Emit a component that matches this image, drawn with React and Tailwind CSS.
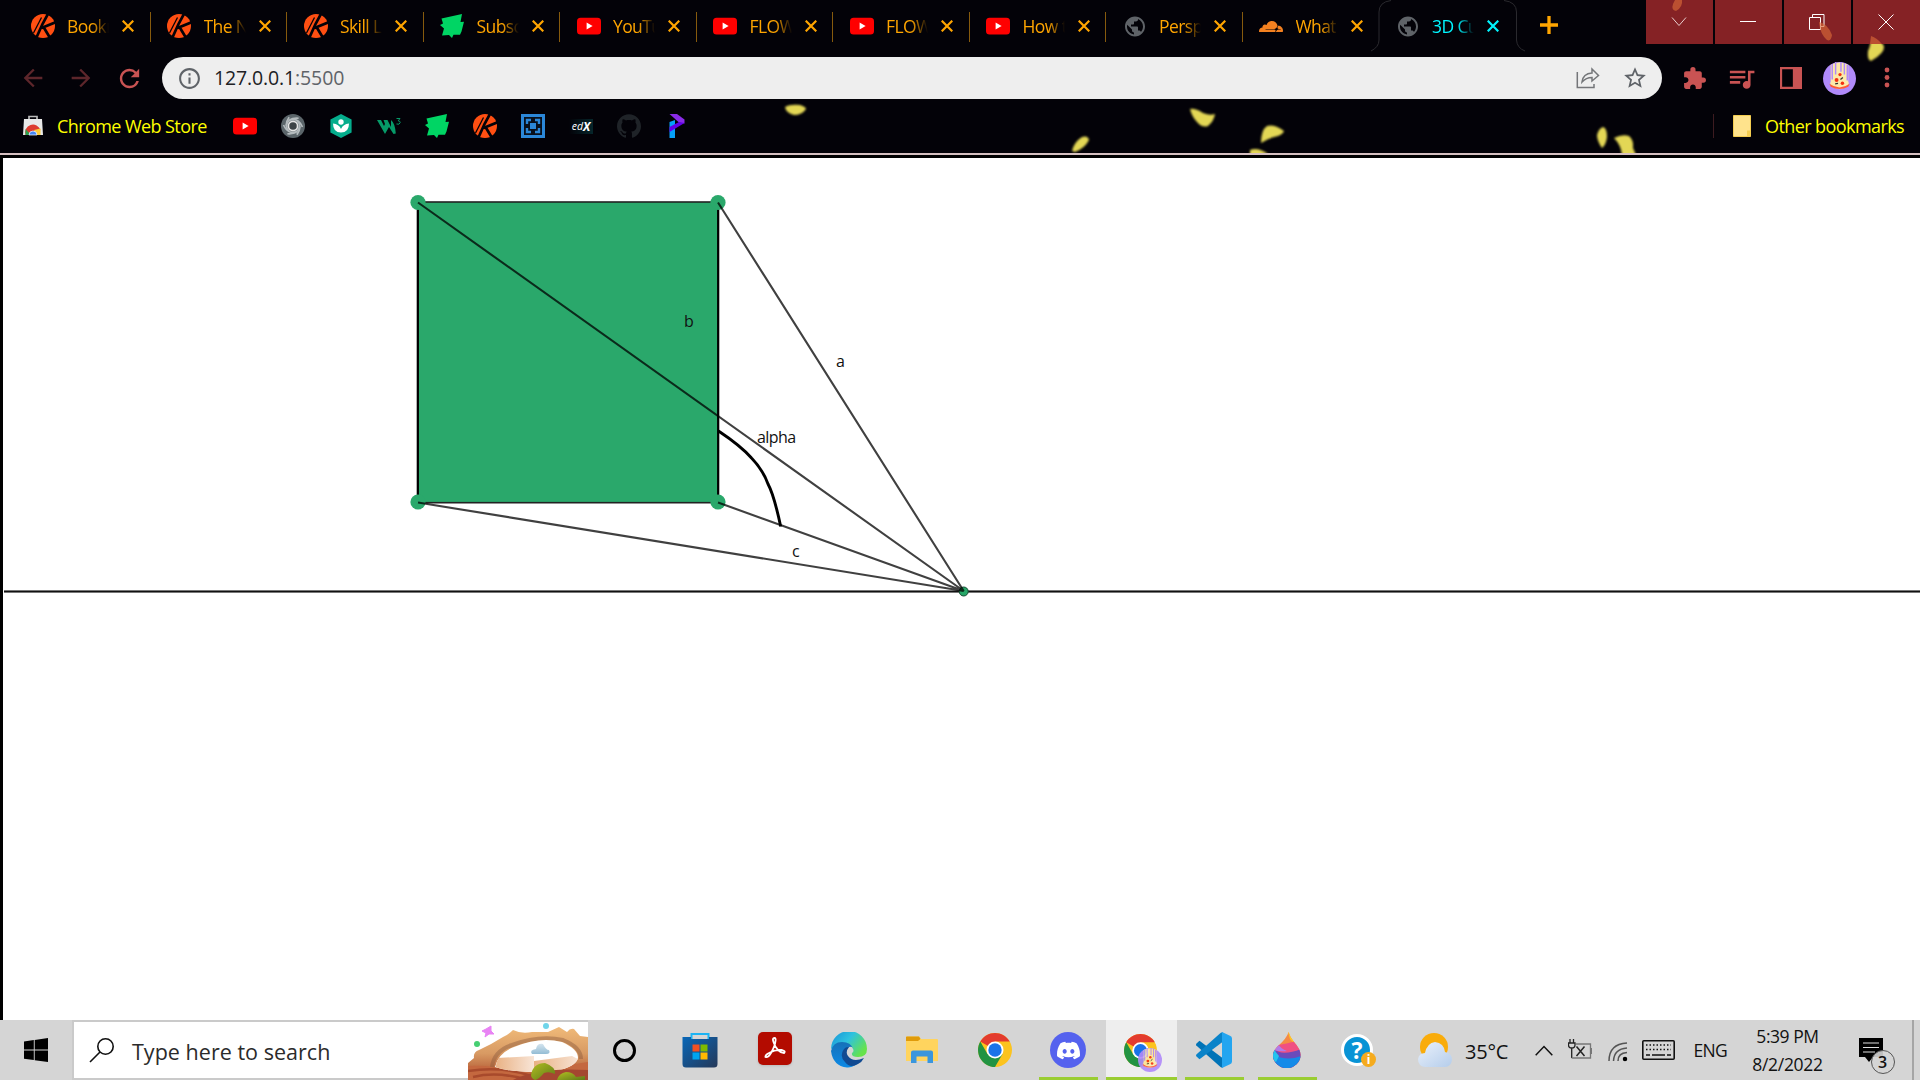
import React from "react";
import { MdExtension, MdQueueMusic, MdStarBorder, MdPublic, MdRefresh, MdArrowBack, MdArrowForward, MdInfoOutline } from "react-icons/md";
import { SiCloudflare, SiGithub, SiDiscord } from "react-icons/si";

const YouTube = () => (
  <svg width="24" height="24" viewBox="0 0 24 24">
    <rect x="0" y="3.8" width="24" height="16.6" rx="3.5" fill="#ff0000" />
    <path d="M9.6 8.5 15.6 12 9.6 15.4z" fill="#fff" />
  </svg>
);
const Kay = () => (
  <svg width="24" height="24" viewBox="0 0 24 24">
    <circle cx="12" cy="12" r="12" fill="#ff4f12" />
    <path d="M17.500-1 11.500 10 5 24.500M10.500 14 24.500 8.300M12.500 13 18.500 23" stroke="#030208" strokeWidth="2.700" fill="none" />
    <path d="M10.500 3.500 2.500 19" stroke="#030208" strokeWidth="1.300" fill="none" />
  </svg>
);
const Green = () => (
  <svg width="24" height="24" viewBox="0 0 24 24">
    <path d="M1.500 4.500 22 0 20.500 8 24 7.700 21.500 17.500 20 20.800 13.500 20.800 12 24 9 21 2 21.500 4 14.500 0 11 3 9.500z" fill="#00d564" />
  </svg>
);
const Globe = () => <MdPublic size={25} className="text-[#5f6368]" />;
const Cloud = () => <SiCloudflare size={25} className="text-[#f48120]" />;

const tabs = [
  { t: "Bookmarks", I: Kay },
  { t: "The New", I: Kay },
  { t: "Skill Lab", I: Kay },
  { t: "Subscribe", I: Green },
  { t: "YouTube", I: YouTube },
  { t: "FLOWER", I: YouTube },
  { t: "FLOWER", I: YouTube },
  { t: "How to", I: YouTube },
  { t: "Perspective", I: Globe },
  { t: "What is", I: Cloud },
  { t: "3D Cube", I: Globe, active: true },
];

function Tab({ t, I, active, sep }) {
  return (
    <div className={"relative flex h-[52px] w-[136.5px] shrink-0 items-center pl-[16.5px] " + (active ? "text-[#00f5ff]" : "text-[#ffa500]")}>
      <span className="flex w-[24px] shrink-0 items-center justify-center"><I /></span>
      <span className="mb-[1px] ml-[12.500px] w-[42px] shrink-0 overflow-hidden whitespace-nowrap text-[17.500px] leading-[26px] tracking-[-0.6px] [mask-image:linear-gradient(to_right,black_60%,transparent)]">{t}</span>
      <svg className="ml-[13px] shrink-0" width="12" height="12" viewBox="0 0 12 12"><path d="M.7.7 11.3 11.3M11.3.7.7 11.3" stroke="currentColor" strokeWidth="2.2" /></svg>
      {sep && <i className="absolute right-0 top-[12px] h-[30px] w-px bg-[#865a0d]" />}
      {active && (
        <svg className="absolute left-[-8px] top-0" width="154" height="52" viewBox="0 0 154 52" fill="none" stroke="#2a292e">
          <path d="M0 51Q8 47 8 40V12Q8 2 20 .5M133 .5Q145.500 2 145.500 12V40Q146 48 154 51" />
        </svg>
      )}
    </div>
  );
}

const Flecks = () => (
  <svg className="pointer-events-none absolute left-0 top-0" width="1920" height="153" viewBox="0 0 1920 153">
    <defs><filter id="soft" x="-20%" y="-20%" width="140%" height="140%"><feGaussianBlur stdDeviation="0.8" /></filter></defs>
    <g fill="#e3d755" filter="url(#soft)">
      <path d="M785 107Q790 104 800 105 806 107 806 109 802 115 794 115 786 113 785 107z" />
      <path d="M1072 151Q1074 142 1082 137 1088 135 1089 140 1085 148 1075 152z" />
      <path d="M1190 109Q1195 108 1203 113 1210 116 1215 114 1214 121 1208 126 1202 128 1197 122 1192 117 1190 109z" />
      <path d="M1261 143Q1261 130 1267 126 1274 124 1284 131 1283 134 1278 136 1268 138 1261 143z" />
      <path d="M1250 150Q1258 147 1268 154L1250 156z" />
      <path d="M1603 127Q1607 128 1607 137 1606 145 1602 148 1597 141 1597 135 1599 128 1603 127z" />
      <path d="M1614 138Q1622 134 1629 136 1634 140 1633 148L1636 155H1622Q1621 145 1614 138z" />
      <path d="M1871 36Q1878 37 1884 46 1885 53 1871 61 1867 60 1868 51 1871 45 1871 36z" />
    </g>
  </svg>
);

const WinBtn = ({ children }) => <div className="flex h-[44px] w-[67px] items-center justify-center overflow-hidden bg-[#852225] pr-[2px] text-white">{children}</div>;

const Avatar = ({ s }) => (
  <svg width={s} height={s} viewBox="0 0 34 34">
    <circle cx="17" cy="17" r="17" fill="#b08afa" />
    <path d="M8 3Q17-2 26 3V20Q29 25 17 28 5 26 8 20z" fill="#fde9a8" />
    <path d="M9.500 2V18M13 0V13M18.500 0V10M22 1V13M25 3V19" stroke="#b08afa" strokeWidth="1.500" />
    <path d="M6.500 22.500Q17 30 27.500 22.500L26 25.500Q17 30 8 25.500z" fill="#ff5a36" />
    <g fill="#f5300f"><circle cx="17.500" cy="13" r="1.700" /><circle cx="14" cy="18.500" r="2" /><circle cx="20" cy="22" r="1.800" /></g>
    <path d="M12.500 22.500 15.500 22M18 18 20.500 16" stroke="#333" strokeWidth="1.300" />
  </svg>
);

const Swirl = () => (
  <svg width="24" height="24" viewBox="0 0 24 24">
    <circle cx="12" cy="12" r="12" fill="#5b656a" />
    <g fill="none" stroke="#b4bbbe" strokeWidth="1.700">
      {[0, 60, 120, 180, 240, 300].map((a) => <path key={a} d="M9 6Q17 3.500 21.500 13" transform={`rotate(${a} 12 12)`} />)}
    </g>
    <circle cx="12" cy="12" r="4.600" fill="#3d4346" stroke="#e4e4e4" strokeWidth="1.700" />
  </svg>
);
const Hex = () => (
  <svg width="24" height="24" viewBox="0 0 24 24">
    <path d="M12 0 22.600 5.500V18.500L12 24 1.400 18.500V5.500z" fill="#05ad8c" />
    <circle cx="12" cy="8" r="2.700" fill="#fff" />
    <path d="M12 18.500Q4 18.500 4 9.500 10 10 12 15 14 10 20 9.500 20 18.500 12 18.500z" fill="#fff" />
  </svg>
);
const W3 = () => (
  <svg width="24" height="24" viewBox="0 0 24 24">
    <path d="M0 6H4L7 12 8 10 6.500 6H10.500L14 13V6Q18 9 18.800 19.500L16.500 20 12 13 8 20z" fill="#069a68" />
    <path d="M19.500 4.500H23L21.200 6.800Q23.300 7 23.200 8.700 22.500 11 19.500 10" stroke="#069a68" fill="none" strokeWidth="1" />
  </svg>
);
const BlueBox = () => (
  <svg width="24" height="24" viewBox="0 0 24 24">
    <rect width="24" height="24" fill="#2b87d8" /><rect x="3" y="3" width="18" height="18" fill="#08101c" />
    <path d="M6 10V6H10M14 6H18V10M18 14V18H14M10 18H6V14" stroke="#2b87d8" strokeWidth="2.400" fill="none" />
    <rect x="9" y="9" width="6" height="6" fill="#2b87d8" />
  </svg>
);
const Edx = () => (
  <span className="relative flex h-[15px] w-[24px] items-center justify-center bg-gradient-to-r from-transparent to-[#06262b] text-[10.5px] font-bold italic leading-none text-white">
    <span className="font-normal">ed</span><span className="pt-[2px] text-[12px]">X</span>
  </span>
);
const Pee = () => (
  <svg width="24" height="24" viewBox="0 0 24 24">
    <path d="M4.500 8 10 6V24H4.500z" fill="#06a0f8" />
    <path d="M4.500 0H12L19.500 5.500V9.500L14 8.500z" fill="#8a2be8" />
    <path d="M19.500 9 4.500 18V13L14 8z" fill="#6200e8" />
  </svg>
);
const StoreBag = () => (
  <svg width="20" height="24" viewBox="0 0 20 24">
    <path d="M6 6V2.500H14V6" stroke="#bbb" strokeWidth="1.700" fill="none" />
    <path d="M1 5H19L20 21H0z" fill="#e9e9e9" />
    <path d="M2.500 21A7.500 7.500 0 0 1 17.500 16L10 18z" fill="#dd3b30" />
    <path d="M2.500 21V15L8 21z" fill="#2ca04c" /><path d="M17.500 21V14.500L11 16 13 21z" fill="#fccb3a" />
    <path d="M6 21A4 4 0 0 1 14 21z" fill="#4285f4" stroke="#fff" strokeWidth=".7" />
  </svg>
);

const bookmarks = [YouTube, Swirl, Hex, W3, Green, Kay, BlueBox, Edx, () => <SiGithub size={24} className="text-[#1f2328]" />, Pee];

function Browser() {
  return (
    <header className="relative h-[158px] shrink-0 border-b-[3px] border-black bg-[#030208]">
      <Flecks />
      <div className="flex h-[52px] pl-[14px]">
        {tabs.map((t, i) => <Tab key={i} {...t} sep={i < 9} />)}
        <svg className="ml-[23.500px] mt-[15px] h-[20px] w-[20px]" viewBox="0 0 20 20"><path d="M10 1V19M1 10H19" stroke="#ffa500" strokeWidth="3.300" /></svg>
        <div className="relative ml-auto flex h-[44px] gap-[2px]">
          <WinBtn><svg width="16" height="10" viewBox="0 0 16 10"><path d="M1 .5 8 8.500 15 .5" stroke="#e7cccc" fill="none" /></svg></WinBtn>
          <WinBtn><svg width="16" height="2"><path d="M0 .5H16" stroke="#fff" /></svg></WinBtn>
          <WinBtn><svg width="16" height="16" viewBox="0 0 16 16"><path d="M.5 3.500H11.500V15.500H.5zM3.500 3.500V.5H15V12.500H12" stroke="#fff" fill="none" /></svg></WinBtn>
          <WinBtn><svg width="16" height="16" viewBox="0 0 16 16"><path d="M.5.5 15.500 15.500M15.500.5.5 15.500" stroke="#fff" /></svg></WinBtn>
          <svg className="pointer-events-none absolute left-0 top-0" width="274" height="44" viewBox="0 0 274 44">
            <g fill="#d86a38" opacity=".65">
              <path d="M29 0H36Q37 7 30 11 25 10 27 4z" /><path d="M173 22Q182 24 186 35 185 42 181 40 174 34 173 22z" /><path d="M225 36Q231 38 236 44H224z" />
            </g>
          </svg>
        </div>
      </div>
      <div className="relative flex h-[52px] items-center text-[#c95353]">
        <MdArrowBack size={28} className="ml-[19px] text-[#5d262b]" />
        <MdArrowForward size={28} className="ml-[20px] text-[#5d262b]" />
        <MdRefresh size={29} className="ml-[20px]" />
        <div className="ml-[18px] flex h-[42px] w-[1500px] items-center rounded-full bg-[#eeeeee] pl-[15px] text-[#5f6368]">
          <MdInfoOutline size={25} />
          <span className="ml-[12px] text-[19.500px] tracking-[-0.13px]"><span className="text-[#202124]">127.0.0.1</span>:5500</span>
          <svg className="ml-auto" width="24" height="22" viewBox="0 0 24 22"><path d="M1.300 5V20.500H18V17M6 15Q7 6.500 16 6V2L22.500 8.500 16 14V10.500Q10 10.500 6 15z" stroke="#747679" strokeWidth="1.500" fill="none" /></svg>
          <MdStarBorder size={26} className="ml-[22px] mr-[14px]" />
        </div>
        <MdExtension size={25} className="ml-[20px]" />
        <MdQueueMusic size={31} className="ml-[19px]" />
        <svg className="ml-[23px]" width="22" height="22"><path d="M1 1H21V21H1zM14 1V21" stroke="currentColor" strokeWidth="2.300" fill="none" /><path d="M14 1H21V21H14z" fill="currentColor" /></svg>
        <span className="ml-[21px]"><Avatar s={33} /></span>
        <svg className="ml-[28px]" width="6" height="22" fill="currentColor"><circle cx="3" cy="3" r="2.400" /><circle cx="3" cy="10.500" r="2.400" /><circle cx="3" cy="18" r="2.400" /></svg>
      </div>
      <div className="relative flex h-[49px] items-center pb-[5px] text-[18px] text-[#ffff00]">
        <span className="ml-[23px]"><StoreBag /></span>
        <span className="ml-[14px] w-[150px] whitespace-nowrap tracking-[-0.58px]">Chrome Web Store</span>
        <div className="ml-[26px] flex gap-[24px]">
          {bookmarks.map((B, i) => <span key={i} className="flex h-6 w-6 items-center justify-center"><B /></span>)}
        </div>
        <i className="ml-auto h-[24px] w-px bg-[#3d1b20]" />
        <svg className="ml-[19px]" width="18" height="22"><path d="M.5.5H17.500V21.500H.5z" fill="#ffe38c" stroke="#f4cd50" /><path d="M14 21V15.500H17.500V21z" fill="#f4cd50" /></svg>
        <span className="ml-[14px] mr-[16px] w-[139px] whitespace-nowrap tracking-[-0.58px]">Other bookmarks</span>
      </div>
      <div className="relative h-[2px] bg-[#d5bfc0]" />
    </header>
  );
}

const labels = [["b", 684, 327], ["a", 836, 367], ["alpha", 757, 443], ["c", 792, 557]];

function Canvas() {
  return (
    <main className="h-[862px] shrink-0 overflow-hidden border-l-[3px] border-black bg-white">
      <svg width="1917" height="862" viewBox="3 158 1917 862">
        <path d="M4 591.500H1920" stroke="#777" strokeWidth="3" /><path d="M4 591.500H1920" stroke="#111" strokeWidth="1" />
        <circle cx="963.700" cy="591.500" r="4.500" fill="#27a768" stroke="#174c33" />
        <rect x="417.800" y="202" width="300.400" height="300.700" fill="#2aa86b" stroke="#222" strokeWidth="1.600" />
        <path d="M417.800 202V502M718.200 202V502" stroke="#000" strokeWidth="2.200" />
        {[[418, 202.500], [718, 202.500], [418, 502], [718, 502]].map(([x, y], i) => <circle key={i} cx={x} cy={y} r="7.600" fill="#2aa86b" />)}
        <path d="M418 202.500 963.700 591 718 202.500M418 502.500 963.700 591 718 502.500" stroke="#000" strokeOpacity=".75" strokeWidth="2.100" fill="none" />
        <path d="M718.500 431Q741 446 751.500 458 763 470 768 484 774 495 780.700 526.500" stroke="#000" strokeWidth="2.900" fill="none" />
        {labels.map(([t, x, y]) => <text key={t} x={x} y={y} fontSize="16" letterSpacing="-.6" fill="#111">{t}</text>)}
      </svg>
    </main>
  );
}

const Chrome = ({ s = 34 }) => (
  <svg width={s} height={s} viewBox="0 0 34 34">
    <circle cx="17" cy="17" r="17" fill="#fcc31e" />
    <path d="M17 17 2.300 8.500A17 17 0 0 1 31.700 8.500H17z" fill="#e33b2e" />
    <path d="M2.300 8.500A17 17 0 0 0 17 34L24.400 21.200 17 17 9.600 21.200z" fill="#229342" />
    <circle cx="17" cy="17" r="8.500" fill="#fff" /><circle cx="17" cy="17" r="6.700" fill="#1a73e8" />
  </svg>
);
const Store = () => (
  <svg width="36" height="36" viewBox="0 0 36 36">
    <defs><linearGradient id="st" x2="1" y2="1"><stop stopColor="#0867b8" /><stop offset="1" stopColor="#253858" /></linearGradient></defs>
    <path d="M9.500 8V2H26.500V8" stroke="#1cb3f3" strokeWidth="2" fill="none" />
    <path d="M.5 5H9V7H27V5H35.500V32Q35.500 35.500 32 35.500H4Q.5 35.500 .5 32z" fill="url(#st)" />
    <path d="M10.500 12.500H17.500V19.500H10.500z" fill="#f25022" /><path d="M18.500 12.500H25.500V19.500H18.500z" fill="#7fba00" />
    <path d="M10.500 20.500H17.500V27.500H10.500z" fill="#00a4ef" /><path d="M18.500 20.500H25.500V27.500H18.500z" fill="#ffb900" />
  </svg>
);
const Adobe = () => <span className="mb-[4px] flex h-[33px] w-[34px] items-center justify-center rounded-[5px] bg-[#b30b00] text-white shadow"><svg width="22" height="22" viewBox="0 0 22 22" fill="none" stroke="#fff" strokeWidth="1.800"><path d="M10.500 1Q8 1 9.500 5 11 10 14 13 17 16 20 16 22 14 18 13 12 12 5 16 1 18 1.500 20 4 21 7 16 11 9 11.500 4 12 1 10.500 1z" /></svg></span>;
const Edge = () => (
  <svg width="36" height="36" viewBox="0 0 36 36">
    <defs>
      <linearGradient id="e1" x2="1" y2=".6"><stop stopColor="#1791d8" /><stop offset=".5" stopColor="#2fc2df" /><stop offset="1" stopColor="#66e34b" /></linearGradient>
      <linearGradient id="e2" x2="0" y2="1"><stop stopColor="#1670b8" /><stop offset="1" stopColor="#0c8ae6" /></linearGradient>
    </defs>
    <path d="M0 17A18 18 0 0 1 36 17Q36 25 27 25 20 25 21 21 24 19 21 15 13 9 0 17z" fill="url(#e1)" />
    <path d="M0 19Q2 10 11 10 20 10 22 17 22 14 18 15 13 17 14 23 16 31 26 32 20 36 16 35.500 2 34 0 19z" fill="url(#e2)" />
    <path d="M13 17Q8 24 14 30 19 37 27 32 31 30 33 26 22 31 17 24 14 20 18 15 15 14.500 13 17z" fill="#114a92" />
  </svg>
);
const Folder = () => (
  <svg width="32" height="28" viewBox="0 0 32 28">
    <path d="M0 1Q0 .5 1 .5H13L15 3H31Q32 3 32 4V25H0z" fill="#ffd45e" /><path d="M0 5V1Q0 .5 1 .5H13L14.500 3 12 5z" fill="#e09b0a" />
    <path d="M5 27V16.500Q5 14.500 7 14.500H25Q27 14.500 27 16.500V27H21.500V20.500H10.500V27z" fill="#3a96dd" />
  </svg>
);
const Discord = () => <span className="flex h-9 w-9 items-center justify-center rounded-full bg-[#5562ee] text-white"><SiDiscord size={23} /></span>;
const ChromeUser = () => <span className="relative mr-[1px]"><Chrome s={33} /><span className="absolute left-[14px] top-[14px] opacity-90"><Avatar s={24} /></span></span>;
const Code = () => (
  <svg width="36" height="36" viewBox="0 0 36 36">
    <path d="M0 12 3.500 8.800 26.500 26V36L24.500 35 .3 13.500z" fill="#0073b7" /><path d="M0 24 3.500 27.200 26.500 10V0L24.500 1 .3 22.500z" fill="#0a83c9" />
    <path d="M26 0 34 3.800Q36 4.500 36 6.500V29.500Q36 31.500 34 32.300L26 36z" fill="#23a5f0" />
  </svg>
);
const Paint = () => (
  <svg width="28" height="36" viewBox="0 0 28 36">
    <defs><clipPath id="drop"><path d="M15.500 0Q14 6 5 14 0 19 0 23A13.500 13 0 0 0 27.500 23Q27.500 17 21 10 17 5 15.500 0z" /></clipPath></defs>
    <g clipPath="url(#drop)"><path d="M0 0H28V36H0z" fill="#f58a46" /><path d="M15 0H22V12L17 7z" fill="#ffcb20" /><path d="M0 13Q13 13 28 7V36H0z" fill="#f04f82" /><path d="M0 16Q8 25 28 17V36H0z" fill="#6b4bbb" /><path d="M0 22Q13 30 28 24V36H0z" fill="#148be8" /><path d="M0 14Q2 20 6 24L3 30 0 28z" fill="#23c4ef" /><path d="M0 16 5 12Q8 17 14 19 8 20 0 18z" fill="#b17be8" /></g>
  </svg>
);
const Help = () => (
  <span className="relative mr-[4px] flex h-[32px] w-[32px] items-center justify-center rounded-full border-[3px] border-white bg-[#0893d5] text-[23px] font-bold leading-none text-white">?
    <span className="absolute -bottom-[4px] -right-[6px] flex h-[15px] w-[15px] items-center justify-center rounded-full bg-[#f5ab1e] text-[12px] leading-none">i</span>
  </span>
);
const Cortana = () => <i className="h-[23px] w-[23px] rounded-full border-[3.500px] border-black" />;

const apps = [
  { I: Cortana, w: "w-[75px]" }, { I: Store, w: "w-[76px]" }, { I: Adobe, w: "w-[74px]" }, { I: Edge, w: "w-[74px]" },
  { I: Folder, w: "w-[72px]" }, { I: Chrome, w: "w-[74px]" }, { I: Discord, w: "w-[73px]", bar: "w-[59px]" },
  { I: ChromeUser, w: "w-[73px]", bar: "w-[71px]", on: true }, { I: Code, w: "w-[73px]", bar: "w-[59px]" },
  { I: Paint, w: "w-[73px]", bar: "w-[59px]" }, { I: Help, w: "w-[71px]" },
];

const Arch = () => (
  <svg className="shrink-0" width="120" height="60" viewBox="0 0 120 60">
    <defs>
      <linearGradient id="a1" x2="0" y2="1"><stop stopColor="#f0ba79" /><stop offset=".5" stopColor="#d89a63" /><stop offset="1" stopColor="#a84726" /></linearGradient>
      <linearGradient id="a2" x2="1" y2="1"><stop stopColor="#b2bd22" /><stop offset="1" stopColor="#5d7a18" /></linearGradient>
      <linearGradient id="a3" x2="1"><stop stopColor="#e9b183" /><stop offset="1" stopColor="#f8e5d7" /></linearGradient>
      <linearGradient id="a4" x2="0" y2="1"><stop stopColor="#d4e4ee" /><stop offset="1" stopColor="#94bdd5" /></linearGradient>
      <clipPath id="hole"><path d="M27 47Q30 33 46 27 72 16 94 22 110 29 110 38 108 47 87 51 48 54 27 47z" /></clipPath>
    </defs>
    <path d="M0 60V43L6 38Q5 32 11 30 24 24 35 17 40 15 45 10 53 14 64 12L80 12 91 7 99 12Q102 8 106 9L112 16 120 17V60z" fill="url(#a1)" />
    <path d="M0 46Q25 44 48 53L120 42V60H0z" fill="#c4683f" />
    <path d="M0 51Q35 46 64 56M5 57Q30 51 60 60" stroke="#a84a2c" strokeWidth="2.500" fill="none" />
    <path d="M24 47Q26 31 44 25 71 15 95 20 113 27 113 39" stroke="#8c5a3e" strokeWidth="4" opacity=".45" fill="none" />
    <g clipPath="url(#hole)">
      <path d="M20 15H115V60H20z" fill="#fff" />
      <path d="M29 38 66 36V54H27z" fill="url(#a3)" /><path d="M66 41 104 36 112 40V54H66z" fill="url(#a3)" />
    </g>
    <path d="M64 34Q61 30 68 29 69 23 75 24 78 30 81 30 83 34 78 34z" fill="url(#a4)" />
    <path d="M45 60Q68 47 120 50V60z" fill="#a44730" />
    <path d="M63 55Q65 43 77 43 88 47 87 54 81 51 76 53 70 60 67 60 63 58 63 55z" fill="url(#a2)" />
    <path d="M89 60Q91 53 98 52 105 52 108 57L117 56V60z" fill="url(#a2)" />
    <path d="M14 11 18 9 23 6 23 11 26 14 21 14 17 17 18 13z" fill="#e883f4" stroke="#e883f4" strokeWidth="1" />
    <circle cx="9" cy="24" r="3" fill="#46cf72" /><circle cx="78" cy="6" r="3" fill="#70d5ea" />
  </svg>
);

function Taskbar() {
  return (
    <footer className="flex h-[60px] shrink-0 items-center bg-[#d5d5d5] text-[#111]">
      <svg className="ml-[24px] shrink-0" width="24" height="24" viewBox="0 0 24 24"><path d="M0 3.500 9.800 2V11.500H0zM10.700 1.900 24 0V11.500H10.700zM0 12.400H9.800V22L0 20.700zM10.700 12.400H24V24L10.700 22.200z" /></svg>
      <div className="ml-[24px] flex h-[60px] w-[516px] shrink-0 items-center border-2 border-r-0 border-[#cacaca] bg-white">
        <svg className="ml-[15px]" width="26" height="25" viewBox="0 0 26 25" fill="none" stroke="#111" strokeWidth="1.600"><circle cx="16.500" cy="8.500" r="7.700" /><path d="M11 14 1 24" /></svg>
        <span className="ml-[17px] mt-[4px] whitespace-nowrap text-[21.500px] tracking-[0.03px] text-[#2b2b2b]">Type here to search</span>
        <span className="ml-auto"><Arch /></span>
      </div>
      <div className="-ml-[1.500px] flex shrink-0">
        {apps.map(({ I, w, bar, on }, i) => (
          <div key={i} className={"flex h-[60px] shrink-0 flex-col items-center " + w}>
            <div className={"flex h-[57px] items-center justify-center pt-[3px] " + (on ? "w-[71px] bg-[#eeeeee]" : "w-full")}><I /></div>
            {bar && <i className={"h-[3px] bg-[#9acd32] " + bar} />}
          </div>
        ))}
      </div>
      <svg className="ml-[23.500px] shrink-0" width="34" height="36" viewBox="0 0 34 36">
        <defs><linearGradient id="wx" x2="1" y2="1"><stop stopColor="#eaf1fb" /><stop offset="1" stopColor="#b5cdeb" /></linearGradient></defs>
        <circle cx="16" cy="15" r="14" fill="#f9ac0b" />
        <path d="M7 35Q0 34 0 27 1 21 7 21 9 11 17 10 26 11 27 20 34 21 34 28 33 35 27 35z" fill="url(#wx)" />
      </svg>
      <span className="ml-[13px] mt-[4px] w-[43px] shrink-0 whitespace-nowrap text-[20px] tracking-[-0.2px]">35°C</span>
      <svg className="ml-[27px] shrink-0" width="18" height="11" viewBox="0 0 18 11"><path d="M.7 10.300 9 1.500 17.300 10.300" stroke="#111" strokeWidth="1.500" fill="none" /></svg>
      <svg className="mb-[2px] ml-[15px] shrink-0" width="24" height="20" viewBox="0 0 24 20" fill="none" stroke="#222" strokeWidth="1.300"><path d="M2 0V4M5.500 0V4M.5 4H7V6Q7 9 3.750 9 .5 9 .5 6zM3.700 9V19" /><path d="M3.700 19H22.500V5H8M23.500 9V15" stroke="#777" /><path d="M8.500 7.500 16.500 17M16.500 7.500 8.500 17" strokeWidth="1.500" /></svg>
      <svg className="ml-[16px] mt-[4px] shrink-0" width="20" height="20" viewBox="0 0 20 20" fill="none" stroke="#555" strokeWidth="1.500"><path d="M1 19Q1 2 19 1M5.500 19Q6 7 19 6M10 19Q10 11 19 10.500" /><circle cx="17" cy="17" r="1.500" fill="#000" stroke="#000" /></svg>
      <svg className="ml-[14px] shrink-0" width="33" height="20" viewBox="0 0 33 20" fill="none" stroke="#111"><rect x=".8" y=".8" width="31.400" height="18.400" rx="1" strokeWidth="1.600" /><path d="M4 5H29M4 9.500H29" strokeDasharray="1.500 2" strokeWidth="1.500" /><path d="M4 15H8M10 15H23M25 15H29" strokeWidth="1.500" /></svg>
      <span className="ml-[18.500px] mt-[1px] w-[34px] shrink-0 whitespace-nowrap text-[17.500px] tracking-[-0.7px]">ENG</span>
      <div className="ml-[20px] flex w-[80px] shrink-0 flex-col items-center whitespace-nowrap text-[17.500px] leading-[28px] tracking-[-0.3px]"><span className="-tracking-[0.45px]">5:39 PM</span><span>8/2/2022</span></div>
      <span className="relative ml-[31px] h-[24px] w-[24px] shrink-0">
        <svg width="24" height="24" viewBox="0 0 24 24"><path d="M0 0H24V19H14L10 24 6 19H0z" fill="#000" /><path d="M4 5H20M4 9.500H20M4 14H16" stroke="#ddd" strokeWidth="1.200" /></svg>
        <span className="absolute left-[12px] top-[12px] flex h-[24px] w-[24px] items-center justify-center rounded-full border border-[#555] bg-[#d5d5d5]/90 text-[16px] font-semibold">3</span>
      </span>
      <i className="ml-auto mr-[6px] h-[60px] w-[2px] bg-[#a5a5a5]" />
    </footer>
  );
}

export default function App() {
  return (
    <div className="flex h-[1080px] w-[1920px] flex-col overflow-hidden bg-white font-['Open_Sans','Noto_Sans',sans-serif]">
      <Browser />
      <Canvas />
      <Taskbar />
    </div>
  );
}
